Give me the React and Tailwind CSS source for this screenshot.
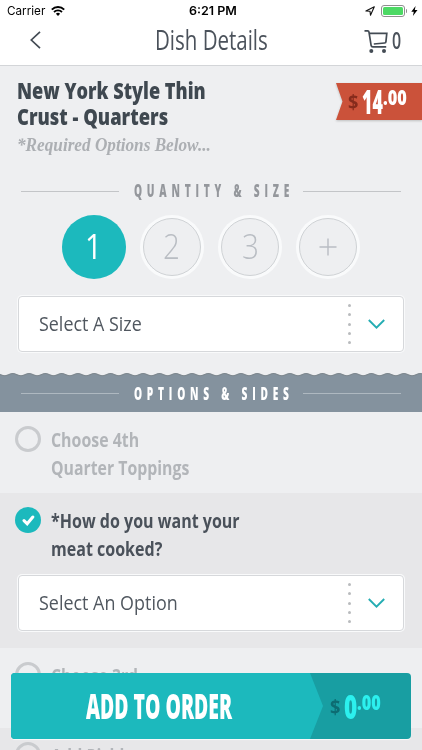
import { useLayoutEffect, useRef, useState } from "react";

// Condenses (or widens) a single line of text so it fills the given width.
function FitText({ width, className = "", children }) {
  const ref = useRef(null);
  const [scale, setScale] = useState(1);

  useLayoutEffect(() => {
    setScale(width / ref.current.offsetWidth);
  }, [width]);

  return (
    <span className={`block ${className}`} style={{ width }}>
      <span
        ref={ref}
        className="inline-block origin-left whitespace-nowrap align-top"
        style={{ transform: `scaleX(${scale})` }}
      >
        {children}
      </span>
    </span>
  );
}

function StatusBar() {
  return (
    <div className="grid h-[22px] grid-cols-[1fr_auto_1fr] items-center pr-1 pl-[7px] font-['Inter',sans-serif] text-black">
      <div className="flex items-center gap-[6px]">
        <FitText width={38} className="text-[12px] leading-[22px]">Carrier</FitText>
        <svg className="h-[10px] w-[14px]" viewBox="0 0 14 10" fill="none" stroke="#000">
          <path d="M.8 3.6a8.9 8.9 0 0 1 12.4 0" strokeWidth="2" />
          <path d="M3 6a5.8 5.8 0 0 1 8 0" strokeWidth="1.8" />
          <path d="M7 10 4.9 7.8a3 3 0 0 1 4.2 0z" fill="#000" stroke="none" />
        </svg>
      </div>
      <FitText width={48} className="text-[12px] leading-[22px] font-semibold">6:21 PM</FitText>
      <div className="flex items-center justify-end">
        <svg className="mr-[6px] h-[10px] w-[10px]" viewBox="0 0 10 10" fill="none" stroke="#111" strokeWidth="1.1">
          <path d="M9.3.8 5.5 9.2 5 5.2.9 5z" strokeLinejoin="round" />
        </svg>
        <div className="h-[12px] w-[24px] rounded-[3px] border border-[#8f8f8f] p-px">
          <div className="h-full w-full rounded-[1.5px] bg-[#4cd964]" />
        </div>
        <div className="ml-px h-1 w-px rounded-r bg-[#8f8f8f]" />
        <svg className="ml-1 h-[10px] w-[7px]" viewBox="0 0 7 10">
          <path d="M4.6 0 .3 5.7h2.5L1.9 10l4.6-5.9H3.8z" fill="#000" />
        </svg>
      </div>
    </div>
  );
}

function NavBar() {
  return (
    <div className="grid h-[43px] grid-cols-[1fr_auto_1fr] items-start text-[#4b525b]">
      <svg className="mt-[9px] ml-[30px] h-[18px] w-[11px]" viewBox="0 0 11 18" fill="none" stroke="#434b54" strokeWidth="1.7">
        <path d="M10 .8 1.3 9 10 17.2" />
      </svg>
      <FitText width={113} className="font-['Open_Sans',sans-serif] text-[27px] leading-[36px] font-normal">
        Dish Details
      </FitText>
      <div className="flex justify-end pr-[21px]">
        <svg className="mt-2 h-[24px] w-[25px]" viewBox="0 0 25 24" fill="none" stroke="#434b54" strokeWidth="1.7">
          <path d="M.5 .9h3.2q1.1 0 1.3 1.2l2.1 13.3q.2 1.5 1.7 1.5h13.4" />
          <path d="M5.4 3.3h17.4l-.9 8.6q-.1 1-1.2 1.1l-10.9 1" />
          <circle cx="7.3" cy="21" r="2" fill="#434b54" stroke="none" />
          <circle cx="20" cy="21" r="2" fill="#434b54" stroke="none" />
        </svg>
        <FitText width={9} className="ml-[3px] font-['Open_Sans',sans-serif] text-[23px] leading-[36px] font-semibold">
          0
        </FitText>
      </div>
    </div>
  );
}

function PriceText({ whole, wholeWidth, signClass, className }) {
  return (
    <div className={`flex items-start font-['Open_Sans',sans-serif] font-extrabold ${className}`}>
      <FitText width={10} className={`mt-[5px] mr-[4px] text-[20px] leading-[24px] font-bold ${signClass}`}>$</FitText>
      <FitText width={wholeWidth} className="text-[33px] leading-[34px]">{whole}</FitText>
      <FitText width={24} className="text-[21px] leading-[24px]">.00</FitText>
    </div>
  );
}

function DishHeader() {
  return (
    <div className="flex h-[111px] items-start justify-between border-t border-[#d3d5d8] pt-[12px] pl-[17px]">
      <div>
        <div className="font-['Open_Sans',sans-serif] text-[23px] leading-[25.5px] font-extrabold text-[#3f4850]">
          <FitText width={189}>New York Style Thin</FitText>
          <FitText width={151}>Crust - Quarters</FitText>
        </div>
        <FitText
          width={194}
          className="mt-[4px] font-['Liberation_Serif',serif] text-[18px] leading-6 font-bold text-[#acafb3] italic"
        >
          *Required Options Below...
        </FitText>
      </div>
      <div className="mt-[5px] drop-shadow-[0_1px_1px_rgba(0,0,0,0.2)]">
        <div className="h-[37px] w-[86px] bg-[#cb523a] pt-[2px] pl-[12px] [clip-path:polygon(0_0,100%_0,100%_100%,0_100%,6.5px_50%)]">
          <PriceText whole="14" wholeWidth={21} signClass="text-[#862b1c]" className="text-white" />
        </div>
      </div>
    </div>
  );
}

function SectionTitle({ lineClass, className, children }) {
  return (
    <div className={`flex items-center px-[21px] ${className}`}>
      <div className={`h-px w-[98px] ${lineClass}`} />
      <FitText
        width={160}
        className="ml-[15px] font-['Open_Sans',sans-serif] text-[17px] leading-5 font-extrabold tracking-[8px]"
      >
        {children}
      </FitText>
      <div className={`ml-auto h-px w-[98px] ${lineClass}`} />
    </div>
  );
}

function QuantityPicker() {
  return (
    <div className="mt-[14px] flex justify-center gap-[14.3px] font-['Open_Sans',sans-serif] text-[35px] leading-[62px] font-light">
      <div className="flex h-16 w-16 justify-center rounded-full bg-[#1cb9bd] text-white">
        <FitText width={17} className="font-normal">1</FitText>
      </div>
      {["2", "3"].map((n) => (
        <div key={n} className="h-16 w-16 rounded-full bg-[#f9fafb] p-[3px]">
          <div className="flex h-full w-full justify-center rounded-full border border-[#cfd2d5] bg-[#eeeff1] leading-[54px] text-[#b9bdc3]">
            <FitText width={17}>{n}</FitText>
          </div>
        </div>
      ))}
      <div className="h-16 w-16 rounded-full bg-[#f9fafb] p-[3px]">
        <div className="flex h-full w-full items-center justify-center rounded-full border border-[#cfd2d5] bg-[#eeeff1]">
          <svg className="h-[18px] w-[18px]" viewBox="0 0 18 18" stroke="#b9bdc3" strokeWidth="1.4">
            <path d="M9 .5v17M.5 9h17" />
          </svg>
        </div>
      </div>
    </div>
  );
}

function SelectBox({ label, labelWidth }) {
  return (
    <div className="mx-[17px] h-[58px] rounded-[5px] bg-[#f9fafb] p-px">
      <div className="flex h-full items-center rounded-[4px] border border-[#d6d8db] bg-white pl-[20px]">
        <FitText width={labelWidth} className="pb-[2px] font-['Open_Sans',sans-serif] text-[20.5px] leading-[52px] text-[#50575f]">
          {label}
        </FitText>
        <div className="mr-[17px] ml-auto flex flex-col gap-[6.2px]">
          {[0, 1, 2, 3, 4].map((dot) => (
            <div key={dot} className="h-[3px] w-[3px] rounded-full bg-[#b9bbbe]" />
          ))}
        </div>
        <svg className="mr-[18px] h-[10px] w-[17px]" viewBox="0 0 17 10" fill="none" stroke="#25adb3" strokeWidth="1.9">
          <path d="M.8 1 8.5 8.6 16.2 1" />
        </svg>
      </div>
    </div>
  );
}

function WavyEdge() {
  return (
    <svg className="block h-[5px] w-full" viewBox="0 0 422 5">
      <defs>
        <pattern id="wave" x="4.6" width="16.3" height="5" patternUnits="userSpaceOnUse">
          <path d="M0 2.8C3 2.8 5 .6 8.15.6s5.15 2.2 8.15 2.2V5H0z" fill="#84929e" />
          <path d="M0 2.8C3 2.8 5 .6 8.15.6s5.15 2.2 8.15 2.2" fill="none" stroke="#7b858c" strokeWidth="1" />
        </pattern>
      </defs>
      <rect width="422" height="5" fill="url(#wave)" />
    </svg>
  );
}

function OptionRow({ lines, checked = false, className = "", children }) {
  return (
    <div className={className}>
      <div className="flex items-start pt-[14px] pl-[15px]">
        {checked ? (
          <div className="flex h-[26px] w-[26px] items-center justify-center rounded-full bg-[#1cb9bd]">
            <svg className="h-[11px] w-[13px]" viewBox="0 0 13 11" fill="none" stroke="#fff" strokeWidth="3" strokeLinecap="round">
              <path d="M2 5.6 5.2 8.8 10.8 2" />
            </svg>
          </div>
        ) : (
          <div className="h-[26px] w-[26px] rounded-full border-3 border-[#c9cbce]" />
        )}
        <div
          className={`ml-[10px] font-['Open_Sans',sans-serif] text-[19.5px] leading-7 font-bold ${
            checked ? "text-[#4a515a]" : "text-[#b2b5b9]"
          }`}
        >
          {lines.map(([text, width]) => (
            <FitText key={text} width={width}>{text}</FitText>
          ))}
        </div>
      </div>
      {children}
    </div>
  );
}

function OrderButton() {
  return (
    <div className="fixed inset-x-[11px] bottom-[11px] flex h-[66px] overflow-hidden rounded-[4px] bg-[#189ea2] shadow-[0_1px_1px_rgba(255,255,255,0.8)]">
      <div className="w-[312px] bg-[#1cb9bd] pt-[3px] pl-[75px] [clip-path:polygon(0_0,299px_0,312px_50%,299px_100%,0_100%)]">
        <FitText width={146} className="font-['Open_Sans',sans-serif] text-[36px] leading-[60px] font-extrabold text-white">
          ADD TO ORDER
        </FitText>
      </div>
      <PriceText
        whole="0"
        wholeWidth={13}
        signClass="text-[#0d6c72]"
        className="mt-[17px] ml-[7px] text-[#2cf0ee]"
      />
    </div>
  );
}

export default function App() {
  return (
    <div className="h-[750px] w-full overflow-hidden bg-[#eeeff1]">
      <div className="bg-white">
        <StatusBar />
        <NavBar />
      </div>
      <DishHeader />
      <SectionTitle className="mt-[5px] text-[#94979c]" lineClass="bg-[#c3c5c8]">QUANTITY &amp; SIZE</SectionTitle>
      <QuantityPicker />
      <div className="mt-[16px] mb-[20px]">
        <SelectBox label="Select A Size" labelWidth={103} />
      </div>
      <WavyEdge />
      <SectionTitle className="h-[34px] bg-[#84929e] pb-[3px] text-white" lineClass="bg-[#aeb8c0]">
        OPTIONS &amp; SIDES
      </SectionTitle>
      <OptionRow className="h-[81px]" lines={[["Choose 4th", 88], ["Quarter Toppings", 138]]} />
      <OptionRow
        checked
        className="h-[155px] bg-[#e7e7e9]"
        lines={[["*How do you want your", 189], ["meat cooked?", 111]]}
      >
        <div className="mt-[11px]">
          <SelectBox label="Select An Option" labelWidth={139} />
        </div>
      </OptionRow>
      <OptionRow className="h-[80px]" lines={[["Choose 3rd", 87], ["Quarter Toppings", 138]]} />
      <OptionRow className="h-[81px] bg-[#e7e7e9]" lines={[["Add Pickles", 91]]} />
      <OrderButton />
    </div>
  );
}
